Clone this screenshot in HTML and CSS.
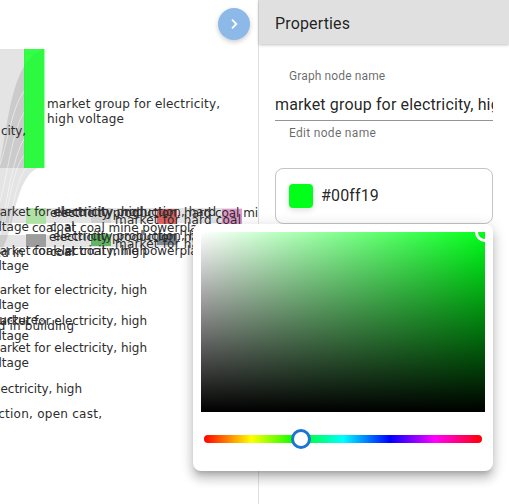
FILE: index.html
```
<!DOCTYPE html>
<html lang="en">
<head>
<meta charset="utf-8">
<title>Properties</title>
<link rel="stylesheet" href="styles.css">
</head>
<body>
<div class="app">
  <main class="graph">
    <svg class="sankey" width="258" height="504" viewBox="0 0 258 504">
      <g class="links">
        <rect x="0" y="49" width="25" height="119"/>
        <path d="M0 163C9 120 12 59 44 49V167C27 167 20 190 14 212C11 228 6 242 0 255Z"/>
        <rect x="0" y="208" width="242" height="15"/>
        <rect x="0" y="235" width="178" height="12"/>
      </g>
      <g class="strands">
        <path d="M0 165C9 135 13 105 25 90"/>
        <path d="M0 202C9 165 14 126 25 111"/>
        <path d="M0 235C9 187 16 145 27 136"/>
        <path d="M4 225C13 180 17 157 30 151"/>
        <path d="M8 230C17 181 21 169 35 160"/>
      </g>
      <g class="nodes">
        <rect x="24" y="49" width="20.500" height="119" fill="#00ff19"/>
        <rect x="26" y="208" width="20" height="16" fill="#98df8a"/>
        <rect x="26" y="234" width="20" height="13" fill="#7f7f7f"/>
        <rect x="91" y="208" width="20" height="15" fill="#c7c7c7"/>
        <rect x="91" y="234" width="20" height="12" fill="#2ca02c"/>
        <rect x="157" y="209" width="20" height="15" fill="#d62728"/>
        <rect x="157" y="234" width="20" height="11" fill="#53616f"/>
        <rect x="222" y="209" width="20" height="15" fill="#e377c2"/>
      </g>
      <g class="labels">
        <text x="47" y="108" textLength="173">market group for electricity,</text>
        <text x="47" y="123" textLength="77">high voltage</text>
        <text x="1" y="135" textLength="25">city,</text>
        <text x="-12" y="216" textLength="159">market for electricity, high</text>
        <text x="-16" y="231" textLength="45">voltage</text>
        <text x="53" y="216" textLength="163">electricity production, hard</text>
        <text x="50" y="217" textLength="223">electricity production, hard coal mine</text>
        <text x="32" y="232" textLength="178">coal, at coal mine powerplant</text>
        <text x="50" y="231">coal</text>
        <text x="115" y="224" textLength="126">market for hard coal</text>
        <text x="49" y="241" textLength="162">electricity production, hard</text>
        <text x="53" y="240" textLength="163">electricity production, hard</text>
        <text x="115" y="248" textLength="126">market for hard coal</text>
        <text x="-12" y="255" textLength="159">market for electricity, high</text>
        <text x="-20" y="257">used in</text>
        <text x="32" y="255" textLength="178">coal, at coal mine powerplant</text>
        <text x="50" y="256">coal</text>
        <text x="-16" y="270" textLength="45">voltage</text>
        <text x="-12" y="294" textLength="159">market for electricity, high</text>
        <text x="-16" y="309" textLength="45">voltage</text>
        <text x="-12" y="325" textLength="159">market for electricity, high</text>
        <text x="-16" y="340" textLength="45">voltage</text>
        <text x="-17" y="324" textLength="59">structure,</text>
        <text x="-24" y="330" textLength="98">used in building</text>
        <text x="-12" y="352" textLength="159">market for electricity, high</text>
        <text x="-16" y="367" textLength="45">voltage</text>
        <text x="-10" y="393" textLength="92">electricity, high</text>
        <text x="-38" y="418" textLength="140">production, open cast,</text>
      </g>
    </svg>
    <button class="toggle" aria-label="Close panel">
      <svg width="12" height="12" viewBox="0 0 12 12"><path d="M4 1.700 8.300 6 4 10.300"/></svg>
    </button>
  </main>
  <aside class="panel">
    <header class="panel-header">Properties</header>
    <div class="panel-body">
      <div class="label">Graph node name</div>
      <div class="name-input">market group for electricity, high voltage</div>
      <div class="hint">Edit node name</div>
      <div class="color-field"><span class="swatch"></span><span>#00ff19</span></div>
    </div>
  </aside>
  <div class="picker">
    <div class="saturation"><span class="cursor"></span></div>
    <div class="hue"><span class="thumb"></span></div>
  </div>
</div>
</body>
</html>
```
FILE: styles.css
```
* { box-sizing: border-box; }
body { margin: 0; background: #fff; font-family: Roboto, sans-serif; color: rgba(0,0,0,.87); }
.app { position: relative; display: flex; width: 509px; height: 504px; overflow: hidden; }
.graph { position: relative; width: 258px; flex: none; overflow: hidden; }
.sankey { display: block; }
.links { fill: #000; fill-opacity: .105; }
.strands { fill: none; stroke: #fff; stroke-opacity: .5; stroke-width: 1; }
.nodes { opacity: .8; }
.nodes rect:not(:first-child) { fill-opacity: .88; }
.labels { font-family: Verdana, "DejaVu Sans", sans-serif; font-size: 12px; fill: #2d2d2d; }
.toggle { position: absolute; top: 8px; left: 218px; width: 32px; height: 32px; padding: 0; border: 0; border-radius: 50%; background: #8cb9e8; display: grid; place-items: center; box-shadow: 0 2px 5px rgba(0,0,0,.2); }
.toggle path { fill: none; stroke: #fff; stroke-width: 1.800; }
.panel { flex: 1; min-width: 0; border-left: 1px solid #e0e0e0; }
.panel-header { height: 44px; padding-left: 16px; background: #e0e0e0; font-size: 16px; line-height: 47px; letter-spacing: .15px; box-shadow: 0 1px 3px rgba(0,0,0,.25); }
.panel-body { padding: 24px 16px 0; }
.label, .hint { padding-left: 14px; font-size: 12px; line-height: 16px; letter-spacing: .12px; color: rgba(0,0,0,.6); }
.hint { margin-top: 4px; letter-spacing: .3px; }
.name-input { height: 37px; padding-top: 11px; border-bottom: 1px solid #949494; font-size: 16px; line-height: 20px; letter-spacing: .15px; white-space: nowrap; overflow: hidden; }
.color-field { display: flex; align-items: center; gap: 8px; height: 56px; margin-top: 27px; padding-left: 13px; border: 1px solid #c4c4c4; border-radius: 8px; font-size: 16px; line-height: 18px; letter-spacing: .15px; }
.swatch { width: 24px; height: 24px; border-radius: 4px; background: #00ff19; box-shadow: 0 2px 6px rgba(0,0,50,.15); }
.picker { position: absolute; left: 193px; top: 224px; width: 300px; height: 247px; padding: 8px; border-radius: 8px; background: #fff; box-shadow: 0 5px 5px -3px rgba(0,0,0,.2), 0 8px 10px 1px rgba(0,0,0,.14), 0 3px 14px 2px rgba(0,0,0,.12); }
.saturation { position: relative; overflow: hidden; height: 180px; background: linear-gradient(to top, #000, transparent), linear-gradient(to right, #fff, #00ff19); }
.cursor { position: absolute; right: -10px; top: -10px; width: 20px; height: 20px; border: 3px solid #fff; border-radius: 50%; }
.hue { position: relative; height: 8px; margin: 23px 3px 0; border-radius: 4px; background: linear-gradient(to right, red, #ff0 17%, #0f0 33%, #0ff 50%, #00f 67%, #f0f 83%, red); }
.thumb { position: absolute; left: 87px; top: -6px; width: 20px; height: 20px; border: 3px solid #1976d2; border-radius: 50%; background: #fff; }
```
